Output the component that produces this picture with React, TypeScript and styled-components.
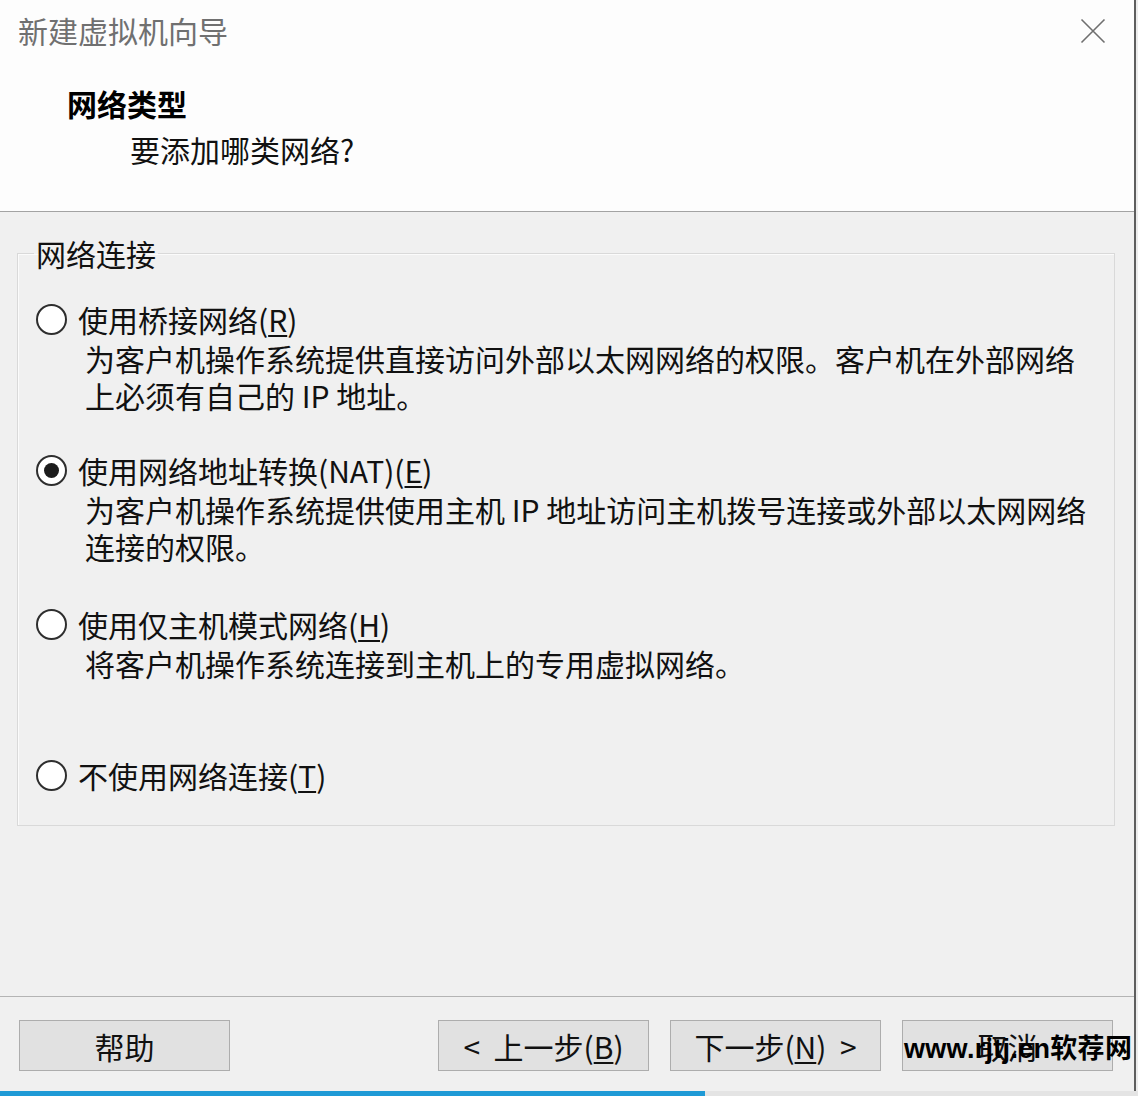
import React from "react";
import styled, { createGlobalStyle } from "styled-components";

const GlobalStyle = createGlobalStyle`
  html, body { margin: 0; padding: 0; }
  body {
    background: #ececec;
    font-family: "Noto Sans CJK SC", "Noto Sans", sans-serif;
    color: #111;
  }
`;

const Page = styled.div`
  width: 1138px;
  height: 1096px;
  display: flex;
  flex-direction: column;
  overflow: hidden;
  background: #ececec;
`;

const Dialog = styled.div`
  width: 1136px;
  height: 1091px;
  display: flex;
  flex-direction: column;
  background: #f0f0f0;
  border-right: 2px solid #5e5e5e;
  box-sizing: border-box;
`;

const Header = styled.header`
  height: 212px;
  flex: none;
  background: #fdfdfd;
  border-bottom: 1px solid #a3a3a3;
  box-sizing: border-box;
  display: flex;
  flex-direction: column;
`;

const TitleBar = styled.div`
  height: 60px;
  display: flex;
  align-items: center;
  justify-content: space-between;
  padding: 0 28px 0 18px;
`;

const WindowTitle = styled.div`
  font-size: 30px;
  line-height: 60px;
  color: #707070;
`;

const CloseButton = styled.div`
  width: 26px;
  height: 26px;
  display: flex;
  align-items: center;
  justify-content: center;
  margin-top: 2px;
`;

const Heading = styled.div`
  margin: 23px 0 0 67px;
  font-size: 30px;
  line-height: 40px;
  font-weight: 700;
  color: #000;
`;

const SubHeading = styled.div`
  margin: 6px 0 0 130px;
  font-size: 30px;
  line-height: 40px;
  color: #111;
`;

const Body = styled.main`
  flex: 1;
  display: flex;
  flex-direction: column;
`;

const GroupBox = styled.fieldset`
  margin: 25px 19px 0 17px;
  padding: 30px 18px 30px 18px;
  border: 1px solid #d9d9d9;
  box-shadow: inset 1px 1px 0 #fbfbfb;
  min-width: 0;
`;

const Legend = styled.legend`
  margin-left: -2px;
  padding: 0 2px;
  font-size: 30px;
  line-height: 32px;
  color: #111;
`;

const Option = styled.div<{ $gap: number }>`
  margin-top: ${(p) => p.$gap}px;
  display: flex;
  flex-direction: column;
`;

const OptionLabel = styled.label`
  height: 40px;
  display: flex;
  align-items: center;
  gap: 11px;
  font-size: 30px;
  line-height: 40px;
  color: #111;
`;

const Radio = styled.span<{ $checked?: boolean }>`
  width: 31px;
  height: 31px;
  box-sizing: border-box;
  border-radius: 50%;
  border: 2px solid #2e2e2e;
  background: #fff;
  display: flex;
  align-items: center;
  justify-content: center;
  flex: none;
  &::after {
    content: "";
    width: 15px;
    height: 15px;
    border-radius: 50%;
    background: #1c1c1c;
    display: ${(p) => (p.$checked ? "block" : "none")};
  }
`;

const Accel = styled.span`
  text-decoration: underline;
  text-underline-offset: 3px;
  text-decoration-thickness: 1.5px;
`;

const Description = styled.div`
  margin-top: 1px;
  padding-left: 49px;
  font-size: 30px;
  line-height: 37px;
  color: #111;
`;

const DescLine = styled.div`
  white-space: nowrap;
`;

const Spacer = styled.div`
  flex: 1;
`;

const Footer = styled.footer`
  border-top: 1px solid #b4b4b4;
  padding: 23px 21px 20px 19px;
  display: flex;
  align-items: center;
`;

const ButtonGroup = styled.div`
  margin-left: auto;
  display: flex;
  gap: 21px;
`;

const Button = styled.div`
  position: relative;
  width: 211px;
  height: 51px;
  box-sizing: border-box;
  background: #e1e1e1;
  border: 1px solid #adadad;
  display: flex;
  align-items: center;
  justify-content: center;
  font-size: 30px;
  color: #111;
  white-space: nowrap;
`;

const Watermark = styled.span`
  position: absolute;
  left: 1px;
  top: 50%;
  transform: translateY(-50%);
  font-family: "Liberation Sans", "Noto Sans CJK SC", sans-serif;
  font-weight: 700;
  font-size: 27px;
  color: #000;
  white-space: nowrap;
  letter-spacing: 0.3px;
`;

const BottomStrip = styled.div`
  height: 5px;
  display: flex;
  background: #e4e4e4;
`;

const TaskbarBlue = styled.div`
  width: 705px;
  background: #1f9ad6;
`;

type Opt = {
  gap: number;
  checked?: boolean;
  label: React.ReactNode;
  desc: string[];
};

const options: Opt[] = [
  {
    gap: 0,
    label: (
      <>
        使用桥接网络(<Accel>R</Accel>)
      </>
    ),
    desc: [
      "为客户机操作系统提供直接访问外部以太网网络的权限。客户机在外部网络",
      "上必须有自己的 IP 地址。",
    ],
  },
  {
    gap: 36,
    checked: true,
    label: (
      <>
        使用网络地址转换(NAT)(<Accel>E</Accel>)
      </>
    ),
    desc: [
      "为客户机操作系统提供使用主机 IP 地址访问主机拨号连接或外部以太网网络",
      "连接的权限。",
    ],
  },
  {
    gap: 39,
    label: (
      <>
        使用仅主机模式网络(<Accel>H</Accel>)
      </>
    ),
    desc: ["将客户机操作系统连接到主机上的专用虚拟网络。"],
  },
  {
    gap: 73,
    label: (
      <>
        不使用网络连接(<Accel>T</Accel>)
      </>
    ),
    desc: [],
  },
];

export default function App() {
  return (
    <Page>
      <GlobalStyle />
      <Dialog>
        <Header>
          <TitleBar>
            <WindowTitle>新建虚拟机向导</WindowTitle>
            <CloseButton>
              <svg width="26" height="26" viewBox="0 0 26 26">
                <path
                  d="M1.5 1.5 L24.5 24.5 M24.5 1.5 L1.5 24.5"
                  stroke="#6f6f6f"
                  strokeWidth="1.6"
                  fill="none"
                />
              </svg>
            </CloseButton>
          </TitleBar>
          <Heading>网络类型</Heading>
          <SubHeading>要添加哪类网络?</SubHeading>
        </Header>
        <Body>
          <GroupBox>
            <Legend>网络连接</Legend>
            {options.map((o, i) => (
              <Option key={i} $gap={o.gap}>
                <OptionLabel>
                  <Radio $checked={o.checked} />
                  <span>{o.label}</span>
                </OptionLabel>
                {o.desc.length > 0 && (
                  <Description>
                    {o.desc.map((d, j) => (
                      <DescLine key={j}>{d}</DescLine>
                    ))}
                  </Description>
                )}
              </Option>
            ))}
          </GroupBox>
          <Spacer />
          <Footer>
            <Button>帮助</Button>
            <ButtonGroup>
              <Button>
                &lt;&nbsp;&nbsp;上一步(<Accel>B</Accel>)
              </Button>
              <Button>
                下一步(<Accel>N</Accel>)&nbsp;&nbsp;&gt;
              </Button>
              <Button>
                取消
                <Watermark>www.rjtj.cn软荐网</Watermark>
              </Button>
            </ButtonGroup>
          </Footer>
        </Body>
      </Dialog>
      <BottomStrip>
        <TaskbarBlue />
      </BottomStrip>
    </Page>
  );
}
